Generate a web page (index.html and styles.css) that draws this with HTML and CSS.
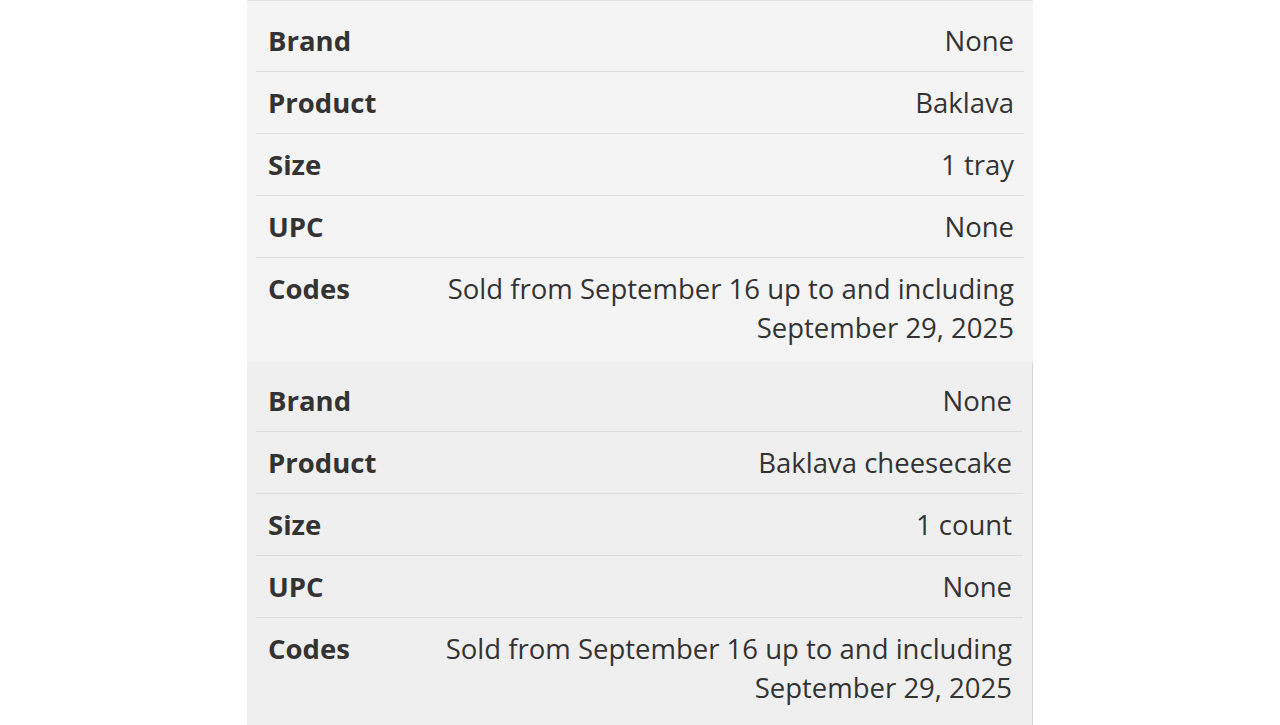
FILE: index.html
```html
<!DOCTYPE html>
<html lang="en">
<head>
    <meta charset="UTF-8">
    <title>Recall details</title>
    <link rel="stylesheet" href="styles.css">
</head>

<body>
    <div class="panel">
        <div class="item first">
            <div class="row">
                <div class="label">Brand</div>
                <div class="value">None</div>
            </div>
            <div class="row">
                <div class="label">Product</div>
                <div class="value">Baklava</div>
            </div>
            <div class="row">
                <div class="label">Size</div>
                <div class="value">1 tray</div>
            </div>
            <div class="row">
                <div class="label">UPC</div>
                <div class="value">None</div>
            </div>
            <div class="row">
                <div class="label">Codes</div>
                <div class="value">Sold from September 16 up to and including September 29, 2025</div>
            </div>
        </div>

        <div class="item second">
            <div class="row">
                <div class="label">Brand</div>
                <div class="value">None</div>
            </div>
            <div class="row">
                <div class="label">Product</div>
                <div class="value">Baklava cheesecake</div>
            </div>
            <div class="row">
                <div class="label">Size</div>
                <div class="value">1 count</div>
            </div>
            <div class="row">
                <div class="label">UPC</div>
                <div class="value">None</div>
            </div>
            <div class="row">
                <div class="label">Codes</div>
                <div class="value">Sold from September 16 up to and including September 29, 2025</div>
            </div>
        </div>
    </div>
</body>
</html>
```

FILE: styles.css
```css
body
{
    margin: 0;
    background: #ffffff;
    font-family: "Open Sans", "Noto Sans", sans-serif;
    color: #333333;
}
.panel
{
    width: 786px;
    margin: 0 auto;
}
.item
{
    padding: 9px 9px 4px 9px;
}
.first
{
    background: #f4f4f4;
    border-top: 1px solid #e4e4e4;
}
.second
{
    background: #efefef;
    border-right: 1px solid #d6d6d6;
    padding: 8px 9px 8px 9px;
}
.row
{
    display: flex;
    align-items: flex-start;
    padding: 11px 10px 11px 12px;
    border-bottom: 1px solid #dedede;
    font-size: 27.5px;
    line-height: 39px;
}
.second .row
{
    padding-right: 11px;
}
.row:last-child
{
    border-bottom: none;
}
.label
{
    flex: 0 0 160px;
    font-weight: bold;
}
.value
{
    flex: 1;
    text-align: right;
}
```
